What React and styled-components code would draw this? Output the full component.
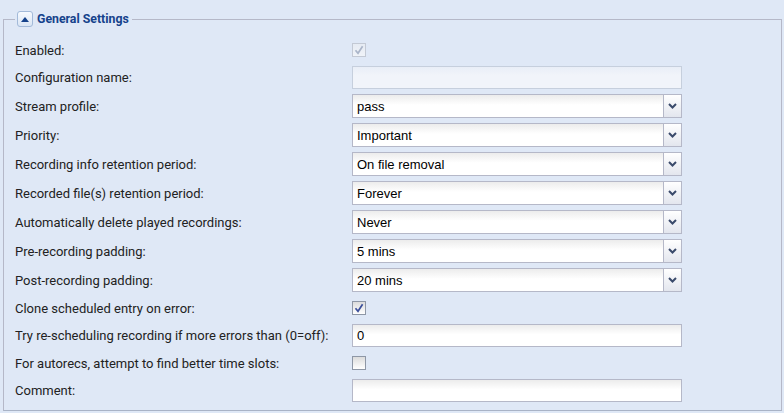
import React from "react";
import styled, { createGlobalStyle } from "styled-components";

const GlobalStyle = createGlobalStyle`
  html, body {
    margin: 0;
    padding: 0;
    background: #dfe8f6;
  }
  body {
    width: 784px;
    height: 413px;
    overflow: hidden;
    font-family: "Roboto", "Liberation Sans", sans-serif;
  }
`;

const Fieldset = styled.fieldset`
  box-sizing: border-box;
  margin: 11px 2px 0 3px;
  width: 779px;
  height: 400px;
  padding: 12px 11px 0 11px;
  border: 1px solid #b5b8c8;
  border-bottom-color: #a9b3c6;
  display: flex;
  flex-direction: column;
  gap: 5px;
`;

const Legend = styled.legend`
  display: flex;
  align-items: center;
  gap: 4px;
  height: 16px;
  padding: 0 3px 0 2px;
  margin-left: 0;
  font-family: "Roboto", sans-serif;
  font-weight: bold;
  font-size: 12.3px;
  color: #15428b;
`;

const Toggle = styled.span`
  box-sizing: border-box;
  width: 16px;
  height: 16px;
  border: 1px solid #a3bad9;
  border-radius: 3px;
  background: linear-gradient(#f7faff, #dae5f4);
  display: flex;
  align-items: center;
  justify-content: center;
`;

const Row = styled.div`
  display: flex;
  align-items: center;
  height: ${(p) => p.$h}px;
`;

const Label = styled.label`
  width: 337px;
  flex: none;
  font-size: 13px;
  color: #222;
`;

const Text = styled.div`
  box-sizing: border-box;
  width: 330px;
  height: 23px;
  border: 1px solid ${(p) => (p.$disabled ? "#c6cfdd" : "#b5b8c8")};
  background: ${(p) =>
    p.$disabled
      ? "linear-gradient(#e9eef7, #f1f4fa 40%)"
      : "linear-gradient(#ececec, #ffffff 45%)"};
  padding: 0 4px;
  display: flex;
  align-items: center;
  font-family: "Liberation Sans", Arial, sans-serif;
  font-size: 13px;
  color: #000;
`;

const Combo = styled.div`
  box-sizing: border-box;
  width: 330px;
  height: 24px;
  border: 1px solid #b5b8c8;
  background: linear-gradient(#ececec, #ffffff 45%);
  display: flex;
  font-family: "Liberation Sans", Arial, sans-serif;
  font-size: 13px;
  color: #000;
`;

const ComboValue = styled.div`
  flex: 1;
  padding: 0 4px;
  display: flex;
  align-items: center;
`;

const Trigger = styled.div`
  width: 17px;
  border-left: 1px solid #b5b8c8;
  background: linear-gradient(#ffffff, #e3e6ee);
  display: flex;
  align-items: center;
  justify-content: center;
`;

const Box = styled.span`
  box-sizing: border-box;
  width: 14px;
  height: 14px;
  border: 1px solid ${(p) => (p.$disabled ? "#c3c9d4" : "#8e97a6")};
  background: ${(p) =>
    p.$disabled
      ? "linear-gradient(#e6ebf3, #f0f3f8)"
      : "linear-gradient(#dcdcdc, #ffffff)"};
  display: flex;
  align-items: center;
  justify-content: center;
`;

const Check = ({ color }) => (
  <svg width="10" height="10" viewBox="0 0 10 10">
    <path d="M1.5 5.2 L4 8.3 L8.6 1.2" fill="none" stroke={color} strokeWidth="1.7" />
  </svg>
);

const Chevron = () => (
  <svg width="9" height="6" viewBox="0 0 9 6">
    <path d="M1 1 L4.5 4.5 L8 1" fill="none" stroke="#3a4a6b" strokeWidth="2" />
  </svg>
);

const Checkbox = ({ checked, disabled }) => (
  <Box $disabled={disabled}>
    {checked && <Check color={disabled ? "#aab5c9" : "#3b4f9a"} />}
  </Box>
);

const fields = [
  { label: "Enabled:", type: "check", checked: true, disabled: true },
  { label: "Configuration name:", type: "text", value: "", disabled: true },
  { label: "Stream profile:", type: "combo", value: "pass" },
  { label: "Priority:", type: "combo", value: "Important" },
  { label: "Recording info retention period:", type: "combo", value: "On file removal" },
  { label: "Recorded file(s) retention period:", type: "combo", value: "Forever" },
  { label: "Automatically delete played recordings:", type: "combo", value: "Never" },
  { label: "Pre-recording padding:", type: "combo", value: "5 mins" },
  { label: "Post-recording padding:", type: "combo", value: "20 mins" },
  { label: "Clone scheduled entry on error:", type: "check", checked: true },
  { label: "Try re-scheduling recording if more errors than (0=off):", type: "text", value: "0" },
  { label: "For autorecs, attempt to find better time slots:", type: "check", checked: false },
  { label: "Comment:", type: "text", value: "" },
];

const heights = { check: 22, text: 23, combo: 24 };

export default function App() {
  return (
    <>
      <GlobalStyle />
      <Fieldset>
        <Legend>
          <Toggle>
            <svg width="8" height="5" viewBox="0 0 8 5">
              <path d="M0 5 L4 0 L8 5 Z" fill="#15428b" />
            </svg>
          </Toggle>
          General Settings
        </Legend>
        {fields.map((f) => (
          <Row key={f.label} $h={heights[f.type]}>
            <Label>{f.label}</Label>
            {f.type === "check" && <Checkbox checked={f.checked} disabled={f.disabled} />}
            {f.type === "text" && <Text $disabled={f.disabled}>{f.value}</Text>}
            {f.type === "combo" && (
              <Combo>
                <ComboValue>{f.value}</ComboValue>
                <Trigger>
                  <Chevron />
                </Trigger>
              </Combo>
            )}
          </Row>
        ))}
      </Fieldset>
    </>
  );
}
